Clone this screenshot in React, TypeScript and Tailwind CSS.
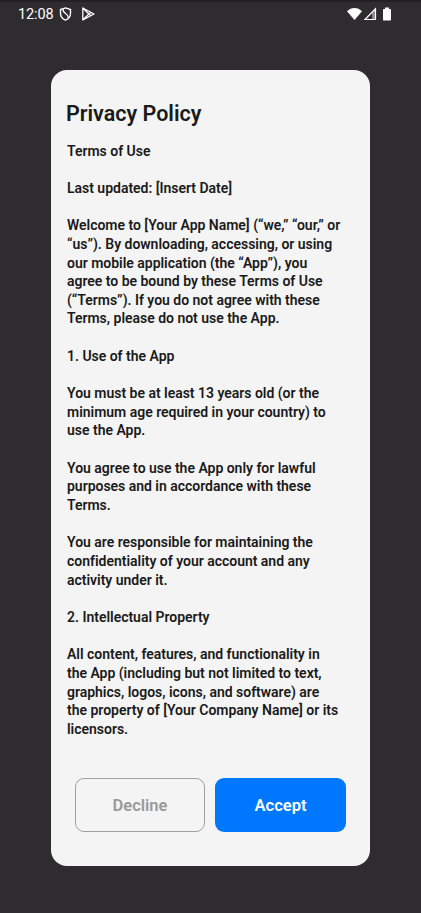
const paragraphs: string[][] = [
  ['Terms of Use'],
  ['Last updated: [Insert Date]'],
  ['Welcome to [Your App Name] (“we,” “our,” or', '“us”). By downloading, accessing, or using', 'our mobile application (the “App”), you', 'agree to be bound by these Terms of Use', '(“Terms”). If you do not agree with these', 'Terms, please do not use the App.'],
  ['1. Use of the App'],
  ['You must be at least 13 years old (or the', 'minimum age required in your country) to', 'use the App.'],
  ['You agree to use the App only for lawful', 'purposes and in accordance with these', 'Terms.'],
  ['You are responsible for maintaining the', 'confidentiality of your account and any', 'activity under it.'],
  ['2. Intellectual Property'],
  ['All content, features, and functionality in', 'the App (including but not limited to text,', 'graphics, logos, icons, and software) are', 'the property of [Your Company Name] or its', 'licensors.'],
];

function StatusBar() {
  return (
    <header className="flex h-7 items-center border-t-2 border-[#222022] pb-[2px] pl-[18px] pr-[29px] text-white">
      <span className="w-[36px] whitespace-nowrap pt-[3px] text-[14.5px] leading-none tracking-[-0.1px]">12:08</span>
      <svg className="ml-[5px]" width="13" height="14" viewBox="0 0 13 14" fill="none" stroke="currentColor" strokeWidth="1.4">
        <path d="M6.500 .9 11.500 2.600V6.500C11.500 9.800 9.200 12 6.500 13.100 3.800 12 1.500 9.800 1.500 6.500V2.600Z" />
        <path d="M3.800 2C3.600 7 9.600 6 9.400 11" />
      </svg>
      <svg className="ml-[9px]" width="14" height="14" viewBox="0 0 14 14" fill="none" stroke="currentColor" strokeWidth="1.3" strokeLinejoin="round">
        <path d="M1.800 1 13 7 1.800 13ZM1.800 1 9.700 8.800M1.800 13 9.700 5.200" />
      </svg>
      <svg className="ml-auto" width="45" height="14" viewBox="0 0 45 14" fill="currentColor">
        <path d="M0 4.300C4-.2 11-.2 15 4.300L7.500 13Z" />
        <path d="M25 5.500V13h4V1.500Z" fill="#8a898b" />
        <path d="M28.500 1.800v10.700H18Z" fill="none" stroke="currentColor" strokeWidth="1.200" />
        <path d="M38 .5h4V2h1.300q.7 0 .7.700v10q0 .8-.8.800h-6.400q-.8 0-.8-.8v-10q0-.7.700-.7H38Z" />
      </svg>
    </header>
  );
}

export default function App() {
  return (
    <div className="h-[913px] w-[421px] overflow-hidden bg-[#2e2c2f] font-[Roboto,sans-serif]">
      <StatusBar />
      <main className="mx-auto mt-[42px] flex h-[796px] w-[319px] flex-col rounded-[16px] bg-[#f4f4f4] px-4 pt-[30px] text-[#1a1a1a]">
        <h1 className="-ml-px text-[21.5px] font-semibold leading-7">Privacy Policy</h1>
        <div className="mt-[13.6px] flex flex-col gap-[18.65px] text-[14px] font-semibold leading-[18.65px] tracking-[-0.02px]">
          {paragraphs.map((lines) => (
            <p key={lines[0]}>
              {lines.map((line) => <span key={line} className="block whitespace-nowrap">{line}</span>)}
            </p>
          ))}
        </div>
        <div className="mx-2 mt-auto mb-[34px] grid grid-cols-[130px_131px] gap-[10px] text-[16.5px] font-semibold">
          <button className="h-[54px] rounded-[9px] border border-[#a0a0a0] pt-0.5 text-[#999]">Decline</button>
          <button className="h-[54px] rounded-[9px] bg-[#0077ff] pt-0.5 text-white">Accept</button>
        </div>
      </main>
    </div>
  );
}
